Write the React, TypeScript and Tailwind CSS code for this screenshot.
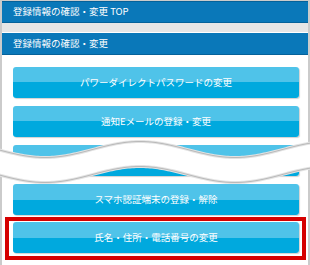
import React from "react";

const items = [
  "パワーダイレクトパスワードの変更",
  "通知Eメールの登録・変更",
  "メールアドレスの変更",
  "スマホ認証端末の登録・解除",
];

// wavy white band that cuts through the list
function wavePath() {
  const top: string[] = [];
  const bottom: string[] = [];
  for (let x = -4; x <= 314; x += 2) {
    const c = 162 + 8 * Math.cos((2 * Math.PI * (x - 45)) / 190);
    top.push(`${x},${(c - 12.5).toFixed(2)}`);
    bottom.push(`${x},${(c + 12.5).toFixed(2)}`);
  }
  return {
    fill: `M${top.join(" L")} L${bottom.reverse().join(" L")} Z`,
    top: `M${top.join(" L")}`,
    bottom: `M${bottom.join(" L")}`,
  };
}

function MenuButton({ label }: { label: string }) {
  return (
    <div className="h-[31px] rounded-[3px] bg-[linear-gradient(#4fc3e9_50%,#00a9de_50%)] shadow-[1px_1px_1px_rgba(0,0,0,0.18)] flex items-center justify-center text-white text-[9.5px] leading-none">
      {label}
    </div>
  );
}

export default function App() {
  const w = wavePath();
  return (
    <div className="relative w-[310px] h-[265px] overflow-hidden bg-[#cbcbcb] pt-[1px] px-[2px] font-['Noto_Sans_CJK_JP',sans-serif]">
      <div className="h-[22px] bg-[#0a78b9] border-t border-[#05629a] border-b flex items-center pl-[11px] text-white text-[9.5px] leading-none">
        登録情報の確認・変更 TOP
      </div>
      <div className="h-[10px] bg-[#e6e6e6] border-b border-white" />
      <div className="h-[22px] bg-[#0a78b9] border-b border-[#05629a] flex items-center pl-[11px] text-white text-[9.5px] leading-none">
        登録情報の確認・変更
      </div>
      <div className="bg-white h-full pt-[12px] pl-[11px] pr-[9px] flex flex-col">
        <div className="flex flex-col gap-[8px]">
          {items.map((t) => (
            <MenuButton key={t} label={t} />
          ))}
        </div>
        <div className="mt-[2px] -ml-[8px] -mr-[7px] border-4 border-[#d50000] pt-[1px] pb-[3px] pl-[4px] pr-[3px]">
          <MenuButton label="氏名・住所・電話番号の変更" />
        </div>
      </div>

      <svg className="absolute left-0 top-0" width="310" height="265" viewBox="0 0 310 265">
        <path d={w.fill} fill="#ffffff" />
        <path d={w.top} fill="none" stroke="#e3e3e3" strokeWidth="3" />
        <path d={w.top} fill="none" stroke="#b9b9b9" strokeWidth="1" />
        <path d={w.bottom} fill="none" stroke="#e3e3e3" strokeWidth="3" />
        <path d={w.bottom} fill="none" stroke="#b9b9b9" strokeWidth="1" />
      </svg>
    </div>
  );
}
